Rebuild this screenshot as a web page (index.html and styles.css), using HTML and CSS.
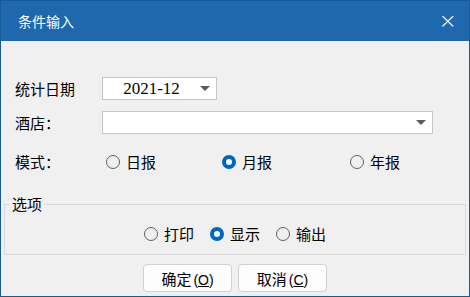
FILE: index.html
```html
<!DOCTYPE html>
<html lang="zh-CN">

<head>
    <meta charset="UTF-8">
    <meta name="viewport" content="width=device-width, initial-scale=1.0">
    <title>条件输入</title>
    <link rel="stylesheet" href="styles.css">
</head>

<body>
    <div class="dialog">
        <div class="titlebar">
            <span class="title">条件输入</span>
            <span class="close">&times;</span>
        </div>

        <div class="client">
            <div class="row first">
                <span class="label">统计日期</span>
                <div class="combo date">
                    <span class="combo-text">2021-12</span>
                    <span class="arrow"></span>
                </div>
            </div>

            <div class="row">
                <span class="label">酒店：</span>
                <div class="combo hotel">
                    <span class="combo-text"></span>
                    <span class="arrow"></span>
                </div>
            </div>

            <div class="row mode">
                <span class="label">模式：</span>
                <div class="mode-opts">
                    <label class="opt"><span class="radio"></span>日报</label>
                    <label class="opt"><span class="radio checked"></span>月报</label>
                    <label class="opt"><span class="radio"></span>年报</label>
                </div>
            </div>

            <fieldset class="group">
                <legend>选项</legend>
                <div class="group-opts">
                    <label class="opt"><span class="radio"></span>打印</label>
                    <label class="opt"><span class="radio checked"></span>显示</label>
                    <label class="opt"><span class="radio"></span>输出</label>
                </div>
            </fieldset>

            <div class="buttons">
                <button class="btn">确定<span class="key">(<u>O</u>)</span></button>
                <button class="btn">取消<span class="key">(<u>C</u>)</span></button>
            </div>
        </div>
    </div>
</body>

</html>
```

FILE: styles.css
```css
html,
body {
    margin: 0;
    padding: 0;
}

body {
    font-family: "Noto Sans CJK SC", "Liberation Sans", sans-serif;
    font-size: 15px;
    color: #000;
    background: #f0f0f0;
}

.dialog {
    width: 470px;
    height: 297px;
    box-sizing: border-box;
    border: 1px solid #185a98;
    background: #f0f0f0;
    display: flex;
    flex-direction: column;
}

/* title bar */
.titlebar {
    height: 40px;
    flex: none;
    background: #1f68ad;
    color: #fff;
    display: flex;
    align-items: center;
    justify-content: space-between;
    padding: 0 12px 0 17px;
}

.title {
    font-size: 14px;
}

.close {
    font-family: "DejaVu Sans", sans-serif;
    font-size: 22px;
    font-weight: 200;
    line-height: 1;
}

/* form rows */
.client {
    flex: 1;
    display: flex;
    flex-direction: column;
}

.row {
    display: flex;
    align-items: center;
    height: 23px;
    margin-top: 11px;
    padding-left: 14px;
}

.row.first {
    margin-top: 36px;
}

.row.mode {
    margin-top: 16px;
}

.label {
    width: 87px;
    flex: none;
}

.combo {
    height: 23px;
    box-sizing: border-box;
    border: 1px solid #c6c6c6;
    background: #fff;
    display: flex;
    align-items: center;
}

.combo.date {
    width: 115px;
}

.combo.hotel {
    width: 331px;
}

.combo-text {
    flex: 1;
    text-align: center;
    font-family: "Liberation Serif", serif;
    font-size: 17px;
}

.arrow {
    width: 0;
    height: 0;
    border-left: 5px solid transparent;
    border-right: 5px solid transparent;
    border-top: 5px solid #575d5a;
    margin-right: 6px;
}

/* radio buttons */
.mode-opts {
    display: grid;
    grid-template-columns: 116px 128px auto;
    padding-left: 4px;
}

.opt {
    display: flex;
    align-items: center;
}

.radio {
    width: 14px;
    height: 14px;
    box-sizing: border-box;
    border: 1px solid #5f5f5f;
    border-radius: 50%;
    margin-right: 6px;
}

.radio.checked {
    border: 4px solid #0067c0;
    background: #fff;
}

/* option group */
.group {
    margin: 21px 3px 0 3px;
    padding: 0;
    border: 1px solid #dadada;
    height: 61px;
    box-sizing: border-box;
}

.group legend {
    margin-left: 5px;
    padding: 0 2px;
    line-height: 20px;
}

.group-opts {
    display: grid;
    grid-template-columns: 66px 66px auto;
    justify-content: center;
    margin-top: 9px;
    line-height: 22px;
}

/* buttons */
.buttons {
    display: flex;
    justify-content: center;
    gap: 6px;
    margin-top: 9px;
}

.btn {
    width: 89px;
    height: 28px;
    border: 1px solid #d0d0d0;
    border-radius: 4px;
    background: #fdfdfd;
    font-family: "Noto Sans CJK SC", "Liberation Sans", sans-serif;
    font-size: 15px;
    color: #000;
    padding: 0;
}

.key {
    font-family: "Liberation Sans", sans-serif;
    font-size: 14px;
    margin-left: 2px;
}
```
